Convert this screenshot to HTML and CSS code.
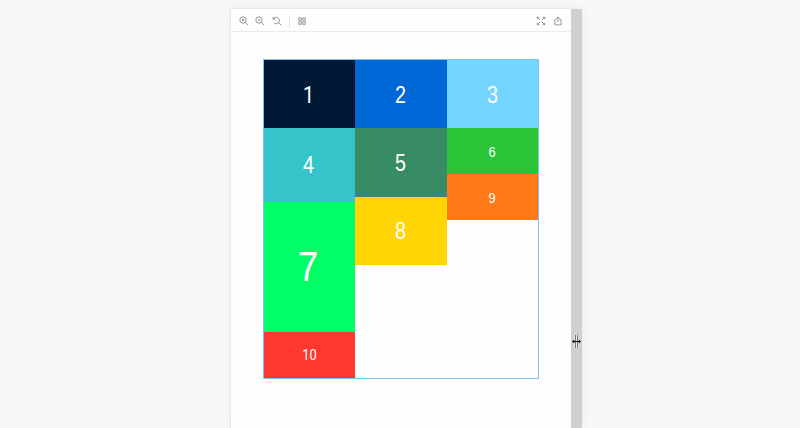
FILE: index.html
```html
<!DOCTYPE html>
<html lang="en">
<head>
<meta charset="utf-8">
<title>Masonry preview</title>
<link rel="stylesheet" href="styles.css">
</head>
<body>
<div class="preview">
  <main class="panel">
    <header class="toolbar">
      <svg class="icon" viewBox="0 0 10 10"><circle cx="4" cy="4" r="3.2"/><path d="M6.4 6.4 9.3 9.3M2.5 4h3M4 2.5v3"/></svg>
      <svg class="icon" viewBox="0 0 10 10"><circle cx="4" cy="4" r="3.2"/><path d="M6.4 6.4 9.3 9.3M2.5 4h3"/></svg>
      <svg class="icon" viewBox="0 0 10 10"><path d="M1.2 .8v2.4h2.4M1.4 3.1A3.2 3.2 0 1 1 2.3 7M6.6 6.5 9.3 9.3"/></svg>
      <span class="divider"></span>
      <svg class="icon grid-icon" viewBox="0 0 10 10"><path d="M1.8 1.8h2.5v2.5H1.8zM5.8 1.8h2.5v2.5H5.8zM1.8 5.8h2.5v2.5H1.8zM5.8 5.8h2.5v2.5H5.8z"/></svg>
      <svg class="icon expand" viewBox="0 0 10 10"><path d="M1.3 3.3v-2h2M6.7 1.3h2v2M8.7 6.7v2h-2M3.3 8.7h-2v-2M1.3 1.3 4 4M8.7 1.3 6 4M8.7 8.7 6 6M1.3 8.7 4 6"/></svg>
      <svg class="icon share" viewBox="0 0 10 10"><path d="M3.4 3.7H1.9v5.2h6.2V3.7H6.6M5 6.2V1M3.2 2.7 5 .9l1.8 1.8"/></svg>
    </header>
    <section class="masonry">
      <div class="column">
        <div class="tile navy medium plain-one"><span>1</span></div>
        <div class="tile teal tall"><span>4</span></div>
        <div class="tile lime large"><span>7</span></div>
        <div class="tile red small plain-one"><span>10</span></div>
      </div>
      <div class="column">
        <div class="tile blue medium"><span>2</span></div>
        <div class="tile forest medium"><span>5</span></div>
        <div class="tile yellow medium"><span>8</span></div>
      </div>
      <div class="column">
        <div class="tile sky medium"><span>3</span></div>
        <div class="tile green small"><span>6</span></div>
        <div class="tile orange small"><span>9</span></div>
      </div>
    </section>
  </main>
  <div class="handle">
    <svg class="cursor" viewBox="0 0 11 15"><path class="halo" d="M4.5 1v13M6.5 1v13M1 7.5h9"/><path class="rails" d="M4.5 1v13M6.5 1v13"/><path class="arrows" d="M1.5 7.5h8M3.2 6.2 1.8 7.5l1.4 1.3M7.8 6.2l1.4 1.3-1.4 1.3"/></svg>
  </div>
</div>
</body>
</html>
```
FILE: styles.css
```css
* { box-sizing: border-box; }

body {
  margin: 0;
  height: 428px;
  overflow: hidden;
  background: #f8f7f9;
  font-family: "Liberation Sans", Arial, sans-serif;
}

.preview {
  display: flex;
  width: 351px;
  height: 419px;
  margin: 9px 0 0 231px;
  box-shadow: 0 0 12px rgba(0, 0, 0, .06);
}

.panel {
  width: 340px;
  background: #fefdff;
  box-shadow: 0 0 0 1px #e9e8ea;
}

.toolbar {
  display: flex;
  align-items: center;
  height: 23px;
  padding: 2px 8px 0 7.6px;
  border-bottom: 1px solid #ebeaec;
}

.icon {
  width: 10px;
  height: 10px;
  margin-right: 6.6px;
  fill: none;
  stroke: #858585;
  stroke-width: .85;
}

.divider {
  width: 1px;
  height: 13px;
  margin-right: 7px;
  margin-left: 1px;
  background: #e4e3e5;
}

.expand { margin-left: auto; }
.share { margin-right: 0; }

.masonry {
  display: grid;
  grid-template-columns: 91px 92px 91px;
  width: 276px;
  height: 320px;
  margin: 27px 0 0 32px;
  border: 1px solid #7fc4f4;
}

.tile {
  display: flex;
  align-items: center;
  justify-content: center;
  color: #fff;
  line-height: 1;
}

.tile span { transform: scaleX(.86); }

.small { height: 46px; font-size: 15px; }
.medium { height: 68.4px; padding: 2px 1px 0 0; font-size: 23px; }
.tall { height: 73.6px; padding: 1px 2px 0 0; font-size: 23px; }
.large { height: 130px; padding-right: 3px; font-size: 43px; }
.sky { height: 68px; }
.plain-one { font-family: Roboto, "Liberation Sans", sans-serif; }
.medium.plain-one { padding-right: 2px; }
.small.plain-one { padding: 2px 1px 0 0; }

.navy { background: #001a36; }
.blue { background: #0067d6; }
.sky { background: #74d5ff; }
.teal { background: #35c4c9; }
.forest { background: #388c65; }
.green { background: #2ac439; }
.lime { background: #00ff66; }
.yellow { background: #ffd505; }
.orange { background: #ff7919; }
.red { background: #ff382f; }

.handle {
  width: 11px;
  padding-top: 325px;
  background: #d0cfd1;
}

.cursor {
  display: block;
  width: 11px;
  height: 15px;
  fill: none;
}

.halo { stroke: #eee; stroke-width: 2; }
.rails { stroke: #777; stroke-width: 1; }
.arrows { stroke: #111; stroke-width: 1.2; }
```
